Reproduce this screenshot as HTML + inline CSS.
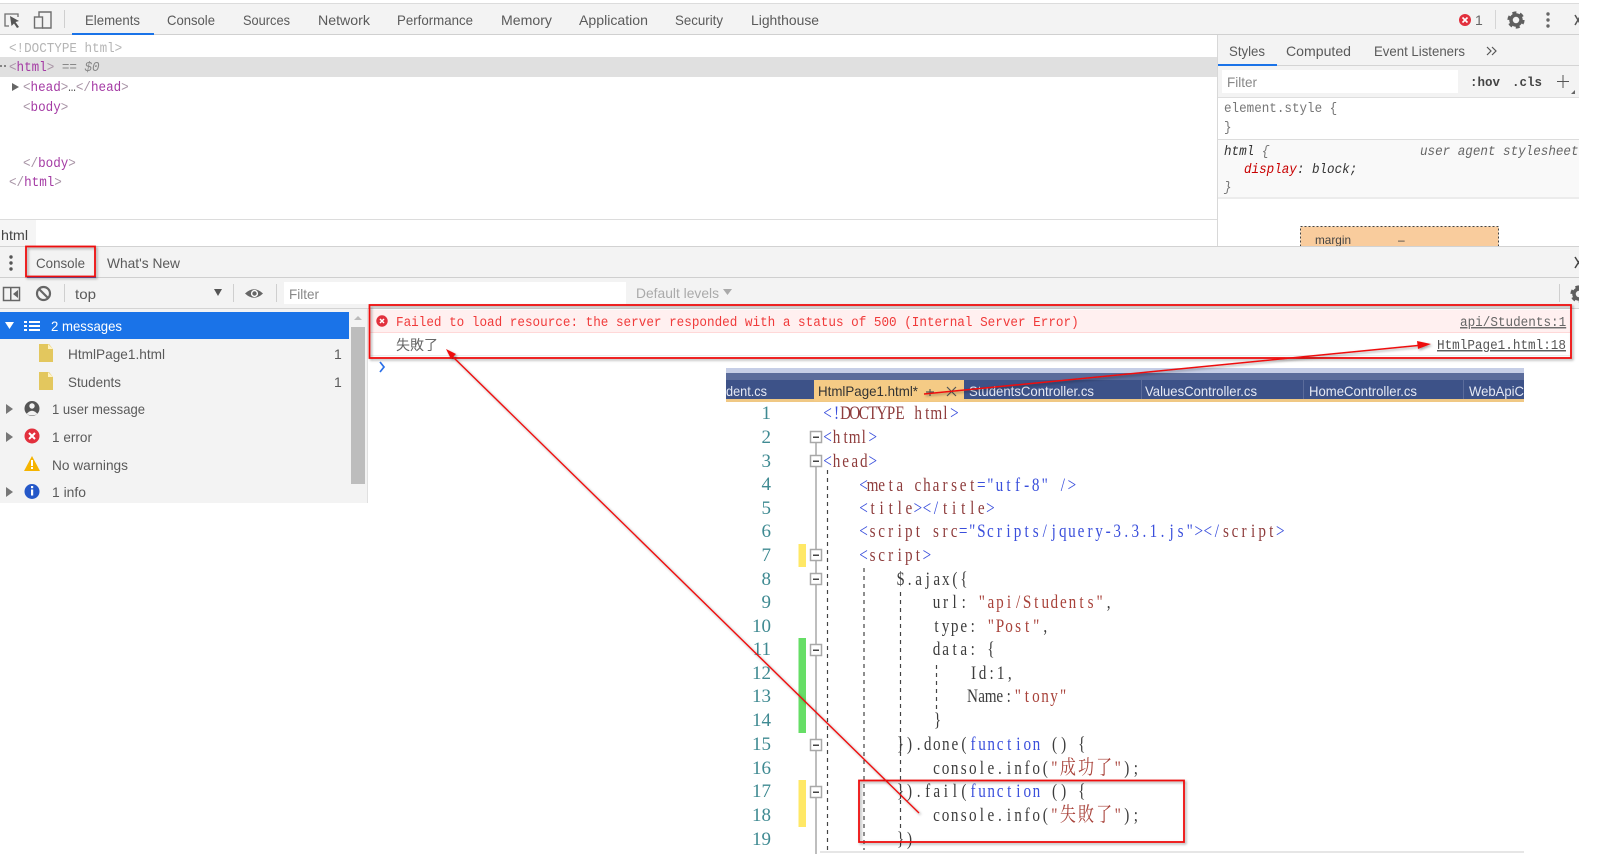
<!DOCTYPE html>
<html><head><meta charset="utf-8"><title>DevTools</title>
<style>
html,body{margin:0;padding:0;background:#fff;width:1600px;height:854px;overflow:hidden}
svg{display:block;position:absolute;left:0;top:0;font-family:"Liberation Sans",sans-serif;font-size:14px;fill:#5a5a5a;filter:blur(.35px)}
text{white-space:pre}
.m{font-family:"Liberation Mono",monospace;font-size:14px}
.p{fill:#a43aa4}
.c{font-family:"Liberation Serif","Noto Serif CJK SC",serif;font-size:19px;text-anchor:middle;fill:#3c3c3c}
.j{font-size:20px;font-family:"Noto Serif CJK TC","Noto Serif CJK SC",serif}
.b{fill:#3a4fdc}.r{fill:#8e3c3c}.st{fill:#a8423a}
.n{font-family:"Liberation Serif",serif;font-size:19px;fill:#3f8a92;text-anchor:end}
.f{fill:#fff;stroke:#a8a8a8;stroke-width:1.5}
</style></head>
<body>
<svg width="1600" height="854" viewBox="0 0 1600 854" xmlns="http://www.w3.org/2000/svg">
<defs><filter id="sh" x="-5%" y="-5%" width="110%" height="110%"><feDropShadow dx="1.5" dy="1.5" stdDeviation="1.2" flood-color="#000" flood-opacity=".35"/></filter></defs>

<!-- top toolbar -->
<rect x="0" y="3" width="1579" height="1" fill="#dcdcdc"/>
<rect x="0" y="4" width="1579" height="30" fill="#f3f3f3"/>
<rect x="0" y="34" width="1579" height="1" fill="#d0d0d0"/>
<rect x="72" y="33" width="82" height="2" fill="#1a73e8"/>
<g fill="none" stroke="#6e6e6e" stroke-width="1.3"><path d="M9 26H5V14H18V17"/></g>
<path d="M10 16L19 21L15.5 22L19 27L17 28L14 23.500L11.500 26Z" fill="#555"/>
<g fill="none" stroke="#6e6e6e" stroke-width="1.4"><path d="M39 17V12H51V28H42"/><rect x="34.500" y="17" width="8" height="11"/></g>
<rect x="64" y="10" width="1" height="18" fill="#cfcfcf"/>
<text x="85" y="25" textLength="55" lengthAdjust="spacingAndGlyphs">Elements</text>
<text x="167" y="25" textLength="48" lengthAdjust="spacingAndGlyphs">Console</text>
<text x="243" y="25" textLength="47" lengthAdjust="spacingAndGlyphs">Sources</text>
<text x="318" y="25" textLength="52" lengthAdjust="spacingAndGlyphs">Network</text>
<text x="397" y="25" textLength="76" lengthAdjust="spacingAndGlyphs">Performance</text>
<text x="501" y="25" textLength="51" lengthAdjust="spacingAndGlyphs">Memory</text>
<text x="579" y="25" textLength="69" lengthAdjust="spacingAndGlyphs">Application</text>
<text x="675" y="25" textLength="48" lengthAdjust="spacingAndGlyphs">Security</text>
<text x="751" y="25" textLength="68" lengthAdjust="spacingAndGlyphs">Lighthouse</text>
<circle cx="1465" cy="20" r="6" fill="#e2303d"/>
<path d="M1462.500 17.500L1467.500 22.500M1467.500 17.500L1462.500 22.500" stroke="#fff" stroke-width="1.6"/>
<text x="1475" y="25" fill="#666">1</text>
<rect x="1495" y="10" width="1" height="19" fill="#d5d5d5"/>
<circle cx="1516" cy="20" r="5" fill="none" stroke="#5f5f5f" stroke-width="3.500"/>
<circle cx="1516" cy="20" r="7.300" fill="none" stroke="#5f5f5f" stroke-width="2.600" stroke-dasharray="4 3.640"/>
<g fill="#666"><circle cx="1548" cy="14" r="1.700"/><circle cx="1548" cy="20" r="1.700"/><circle cx="1548" cy="26" r="1.700"/></g>
<path d="M1575 15L1581 25M1581 15L1575 25" stroke="#555" stroke-width="1.500"/>

<!-- elements tree -->
<rect x="0" y="57" width="1217" height="20" fill="#e0e0e0"/>
<text class="m" transform="translate(9 52) scale(.9 1)" fill="#b5b5b5">&lt;!DOCTYPE html&gt;</text>
<g fill="#666"><circle cx="1" cy="66" r="1"/><circle cx="5" cy="66" r="1"/></g>
<text class="m" transform="translate(9 71) scale(.9 1)" fill="#a894a6">&lt;<tspan class="p">html</tspan>&gt;<tspan fill="#888"> == <tspan font-style="italic">$0</tspan></tspan></text>
<path d="M12 83L19 87L12 91Z" fill="#666"/>
<text class="m" transform="translate(23 91) scale(.9 1)" fill="#a894a6">&lt;<tspan class="p">head</tspan>&gt;<tspan fill="#555">…</tspan>&lt;/<tspan class="p">head</tspan>&gt;</text>
<text class="m" transform="translate(23 111) scale(.9 1)" fill="#a894a6">&lt;<tspan class="p">body</tspan>&gt;</text>
<text class="m" transform="translate(23 167) scale(.9 1)" fill="#a894a6">&lt;/<tspan class="p">body</tspan>&gt;</text>
<text class="m" transform="translate(9 186) scale(.9 1)" fill="#a894a6">&lt;/<tspan class="p">html</tspan>&gt;</text>
<rect x="0" y="219" width="1217" height="1" fill="#dcdcdc"/>
<rect x="0" y="220" width="36" height="26" fill="#f5f5f5"/>
<text x="1" y="240" fill="#444" textLength="27" lengthAdjust="spacingAndGlyphs">html</text>

<!-- styles pane -->
<rect x="1217" y="35" width="1" height="211" fill="#d8d8d8"/>
<rect x="1218" y="35" width="361" height="62" fill="#f3f3f3"/>
<rect x="1218" y="65" width="361" height="1" fill="#d4d4d4"/>
<rect x="1218" y="64" width="59" height="2" fill="#1a73e8"/>
<text x="1229" y="56" textLength="36" lengthAdjust="spacingAndGlyphs">Styles</text>
<text x="1286" y="56" textLength="65" lengthAdjust="spacingAndGlyphs">Computed</text>
<text x="1374" y="56" textLength="91" lengthAdjust="spacingAndGlyphs">Event Listeners</text>
<path d="M1487 47L1491 51L1487 55M1492 47L1496 51L1492 55" fill="none" stroke="#555" stroke-width="1.200"/>
<rect x="1222" y="70" width="236" height="23" fill="#fff"/>
<text x="1227" y="87" fill="#888" textLength="30" lengthAdjust="spacingAndGlyphs">Filter</text>
<text class="m" x="1470" y="86" fill="#444" font-weight="bold" style="font-size:12.500px" textLength="30" lengthAdjust="spacingAndGlyphs">:hov</text>
<text class="m" x="1512" y="86" fill="#444" font-weight="bold" style="font-size:12.500px" textLength="30" lengthAdjust="spacingAndGlyphs">.cls</text>
<path d="M1563 75V88M1557 81.500H1569" stroke="#555" stroke-width="1"/>
<path d="M1575 90V94H1571Z" fill="#666"/>
<rect x="1218" y="97" width="361" height="1" fill="#dedede"/>
<text class="m" transform="translate(1224 112) scale(.9 1)" fill="#777">element.style {</text>
<text class="m" transform="translate(1224 131) scale(.9 1)" fill="#777">}</text>
<rect x="1218" y="139" width="361" height="1" fill="#dcdcdc"/>
<rect x="1218" y="140" width="361" height="57" fill="#f9f9f9"/>
<text class="m" transform="translate(1224 155) scale(.9 1)" font-style="italic" fill="#333">html <tspan fill="#777">{</tspan></text>
<text class="m" transform="translate(1420 155) scale(.9 1)" font-style="italic" fill="#666">user agent stylesheet</text>
<text class="m" transform="translate(1244 173) scale(.9 1)" font-style="italic" fill="#333"><tspan fill="#c80000">display</tspan>: block;</text>
<text class="m" transform="translate(1224 191) scale(.9 1)" font-style="italic" fill="#777">}</text>
<rect x="1218" y="197" width="361" height="2" fill="#ececec"/>
<rect x="1300.500" y="226.500" width="198" height="22" fill="#f9cc9d" stroke="#444" stroke-width="1" stroke-dasharray="2 2"/>
<text x="1315" y="244" fill="#444" font-size="12" textLength="36" lengthAdjust="spacingAndGlyphs">margin</text>
<text x="1398" y="244" fill="#444" font-size="12">–</text>

<!-- drawer tabs -->
<rect x="0" y="246" width="1579" height="1" fill="#d2d2d2"/>
<rect x="0" y="247" width="1579" height="62" fill="#f3f3f3"/>
<rect x="0" y="277" width="1579" height="1" fill="#cfcfcf"/>
<rect x="27" y="276" width="69" height="2" fill="#1a73e8"/>
<g fill="#555"><circle cx="11" cy="257" r="1.700"/><circle cx="11" cy="263" r="1.700"/><circle cx="11" cy="269" r="1.700"/></g>
<text x="36" y="268" textLength="49" lengthAdjust="spacingAndGlyphs">Console</text>
<text x="107" y="268" textLength="73" lengthAdjust="spacingAndGlyphs">What's New</text>
<path d="M1575 257L1582 268M1582 257L1575 268" stroke="#444" stroke-width="1.500"/>

<!-- console toolbar -->
<rect x="3.500" y="287.500" width="16" height="13" fill="none" stroke="#666" stroke-width="1.500"/>
<rect x="10" y="288" width="1.500" height="12" fill="#666"/>
<path d="M18 290V298L13 294Z" fill="#666"/>
<circle cx="43.500" cy="293.500" r="6.500" fill="none" stroke="#666" stroke-width="2.200"/>
<path d="M39 289L48 298" stroke="#666" stroke-width="2.200"/>
<rect x="64" y="284" width="1" height="18" fill="#cfcfcf"/>
<text x="75" y="299" textLength="21" lengthAdjust="spacingAndGlyphs">top</text>
<path d="M214 289H222L218 296Z" fill="#555"/>
<rect x="233" y="284" width="1" height="18" fill="#cfcfcf"/>
<path d="M245 293.500Q254 285 263 293.500Q254 302 245 293.500Z" fill="#666"/>
<circle cx="254.500" cy="293.500" r="3.600" fill="#fff"/><circle cx="254.500" cy="293.500" r="2.200" fill="#666"/>
<rect x="276" y="284" width="1" height="18" fill="#cfcfcf"/>
<rect x="284" y="282" width="342" height="22" fill="#fff"/>
<text x="289" y="299" fill="#888" textLength="30" lengthAdjust="spacingAndGlyphs">Filter</text>
<text x="636" y="298" fill="#aaa" textLength="83" lengthAdjust="spacingAndGlyphs">Default levels</text>
<path d="M723 289H732L727.500 295Z" fill="#aaa"/>
<rect x="1559" y="284" width="1" height="18" fill="#cfcfcf"/>
<circle cx="1579" cy="294" r="5" fill="none" stroke="#5f5f5f" stroke-width="3.500"/>
<circle cx="1579" cy="294" r="7.300" fill="none" stroke="#5f5f5f" stroke-width="2.600" stroke-dasharray="4 3.640"/>
<rect x="0" y="308" width="1579" height="1" fill="#d4d4d4"/>

<!-- sidebar -->
<rect x="0" y="309" width="367" height="194" fill="#f3f3f3"/>
<rect x="367" y="309" width="1" height="194" fill="#e0e0e0"/>
<rect x="0" y="312" width="349" height="27" fill="#1a73e8"/>
<path d="M5 322H14L9.500 329Z" fill="#fff"/>
<g fill="#fff"><rect x="24" y="321" width="3" height="2"/><rect x="29" y="321" width="11" height="2"/><rect x="24" y="325" width="3" height="2"/><rect x="29" y="325" width="11" height="2"/><rect x="24" y="329" width="3" height="2"/><rect x="29" y="329" width="11" height="2"/></g>
<text x="51" y="331" fill="#fff" textLength="71" lengthAdjust="spacingAndGlyphs">2 messages</text>
<path d="M39 344H49L53 349V362H39Z" fill="#e3c75e"/><path d="M48 344L53 349H48Z" fill="#fff3c4"/>
<text x="68" y="359" textLength="97" lengthAdjust="spacingAndGlyphs">HtmlPage1.html</text>
<text x="334" y="359">1</text>
<path d="M39 372H49L53 377V390H39Z" fill="#e3c75e"/><path d="M48 372L53 377H48Z" fill="#fff3c4"/>
<text x="68" y="387" textLength="53" lengthAdjust="spacingAndGlyphs">Students</text>
<text x="334" y="387">1</text>

<path d="M6 404L13 409L6 414Z" fill="#777"/>
<circle cx="32" cy="408.500" r="7.500" fill="#555"/><circle cx="32" cy="406" r="2.700" fill="#f3f3f3"/><path d="M26.500 414Q32 407.500 37.500 414Q32 417 26.500 414Z" fill="#f3f3f3"/>
<text x="52" y="414" textLength="93" lengthAdjust="spacingAndGlyphs">1 user message</text>
<path d="M6 432L13 437L6 442Z" fill="#777"/>
<circle cx="32" cy="436" r="7.500" fill="#e2303d"/><path d="M29 433L35 439M35 433L29 439" stroke="#fff" stroke-width="2"/>
<text x="52" y="442" textLength="40" lengthAdjust="spacingAndGlyphs">1 error</text>
<path d="M32 456L40 471H24Z" fill="#f5b400"/><rect x="31" y="460" width="2" height="6" fill="#fff"/><rect x="31" y="467" width="2" height="2" fill="#fff"/>
<text x="52" y="470" textLength="76" lengthAdjust="spacingAndGlyphs">No warnings</text>
<path d="M6 487L13 492L6 497Z" fill="#777"/>
<circle cx="32" cy="491.500" r="7.500" fill="#2558c8"/><rect x="31" y="489.500" width="2.200" height="6" fill="#fff"/><rect x="31" y="486" width="2.200" height="2.200" fill="#fff"/>
<text x="52" y="497" textLength="34" lengthAdjust="spacingAndGlyphs">1 info</text>
<rect x="351" y="327" width="14" height="157" fill="#bdbdbd"/>
<path d="M354 320L358 316L362 320Z" fill="#bbb"/>

<!-- console messages -->
<rect x="369" y="310" width="1202" height="23" fill="#fff0f0"/>
<rect x="369" y="332" width="1202" height="1" fill="#ffd8d8"/>
<rect x="369" y="355" width="1202" height="1" fill="#ededed"/>
<circle cx="382" cy="321" r="5.700" fill="#e2303d"/><path d="M380 319L384 323M384 319L380 323" stroke="#fff" stroke-width="1.500"/>
<text class="m" transform="translate(396 326) scale(.904 1)" fill="#f03a3a">Failed to load resource: the server responded with a status of 500 (Internal Server Error)</text>
<text class="m" transform="translate(1460 326) scale(.904 1)" fill="#666" text-decoration="underline">api/Students:1</text>
<text class="m" transform="translate(1437 349) scale(.904 1)" fill="#555" text-decoration="underline">HtmlPage1.html:18</text>
<text x="396" y="350" font-family="'Noto Sans CJK TC','Noto Sans CJK SC',sans-serif" font-size="14" fill="#666">失敗了</text>
<path d="M380 362L384 367L380 372" fill="none" stroke="#2a6fe8" stroke-width="1.700"/>

<!-- editor tabs -->
<rect x="726" y="368" width="798" height="5" fill="#c6cee6"/>
<rect x="726" y="373" width="798" height="7" fill="#5b6c9b"/>
<rect x="726" y="380" width="798" height="19" fill="#3d5288"/>
<rect x="726" y="399" width="798" height="3" fill="#f0c884"/>
<rect x="814" y="380" width="150" height="21" fill="#f5cb85"/>
<rect x="1141" y="380" width="1" height="19" fill="#5b6c9b"/><rect x="1303" y="380" width="1" height="19" fill="#5b6c9b"/><rect x="1463" y="380" width="1" height="19" fill="#5b6c9b"/>
<g fill="#e4e8f4">
<text x="726" y="396" textLength="41" lengthAdjust="spacingAndGlyphs">dent.cs</text>
<text x="969" y="396" textLength="125" lengthAdjust="spacingAndGlyphs">StudentsController.cs</text>
<text x="1145" y="396" textLength="112" lengthAdjust="spacingAndGlyphs">ValuesController.cs</text>
<text x="1309" y="396" textLength="108" lengthAdjust="spacingAndGlyphs">HomeController.cs</text>
<text x="1469" y="396" textLength="55" lengthAdjust="spacingAndGlyphs">WebApiC</text>
<text x="818" y="396" textLength="100" lengthAdjust="spacingAndGlyphs" fill="#333">HtmlPage1.html*</text>
</g>
<path d="M930 389V396M926 392H934M947 387L956 396M956 387L947 396" stroke="#555" stroke-width="1.200" fill="none"/>

<!-- gutter -->
<rect x="798.500" y="544" width="7.500" height="23" fill="#ffe866"/>
<rect x="798.500" y="780" width="7.500" height="47" fill="#ffe866"/>
<rect x="798.500" y="638" width="7.500" height="95" fill="#66de66"/>
<path d="M816 443V854" stroke="#a8a8a8" stroke-width="1.500"/>
<g stroke="#444" stroke-width="1.200" stroke-dasharray="4 4" fill="none">
<path d="M827.500 470V854"/><path d="M864 568V850"/><path d="M900.500 592V830"/><path d="M936.500 665V710"/>
</g>
<g>
<rect class="f" x="810.500" y="431.500" width="11" height="11"/><rect x="813" y="436.500" width="6" height="1.500" fill="#444"/>
<rect class="f" x="810.500" y="455.500" width="11" height="11"/><rect x="813" y="460.500" width="6" height="1.500" fill="#444"/>
<rect class="f" x="810.500" y="549.500" width="11" height="11"/><rect x="813" y="554.500" width="6" height="1.500" fill="#444"/>
<rect class="f" x="810.500" y="573.500" width="11" height="11"/><rect x="813" y="578.500" width="6" height="1.500" fill="#444"/>
<rect class="f" x="810.500" y="644.500" width="11" height="11"/><rect x="813" y="649.500" width="6" height="1.500" fill="#444"/>
<rect class="f" x="810.500" y="739.500" width="11" height="11"/><rect x="813" y="744.500" width="6" height="1.500" fill="#444"/>
<rect class="f" x="810.500" y="786.500" width="11" height="11"/><rect x="813" y="791.500" width="6" height="1.500" fill="#444"/>
</g>

<!-- line numbers -->
<g transform="translate(0 -1)">
<text class="n" x="771" y="420">1</text><text class="n" x="771" y="444">2</text><text class="n" x="771" y="468">3</text><text class="n" x="771" y="491">4</text><text class="n" x="771" y="515">5</text><text class="n" x="771" y="538">6</text><text class="n" x="771" y="562">7</text><text class="n" x="771" y="586">8</text><text class="n" x="771" y="609">9</text><text class="n" x="771" y="633">10</text><text class="n" x="771" y="656">11</text><text class="n" x="771" y="680">12</text><text class="n" x="771" y="703">13</text><text class="n" x="771" y="727">14</text><text class="n" x="771" y="751">15</text><text class="n" x="771" y="775">16</text><text class="n" x="771" y="798">17</text><text class="n" x="771" y="822">18</text><text class="n" x="771" y="846">19</text>
</g>

<!-- code -->
<text class="c" transform="translate(823 419) scale(.8 1)" x="5.660 16.990 28.310 39.640 50.960 62.290 73.610 84.940 96.260 107.590 118.910 130.240 141.560 152.890 164.210"><tspan class="b">&lt;!</tspan><tspan class="r">DOCTYPE html</tspan><tspan class="b">&gt;</tspan></text>
<text class="c" transform="translate(823 443) scale(.8 1)" x="5.660 16.990 28.310 39.640 50.960 62.290"><tspan class="b">&lt;</tspan><tspan class="r">html</tspan><tspan class="b">&gt;</tspan></text>
<text class="c" transform="translate(823 467) scale(.8 1)" x="5.660 16.990 28.310 39.640 50.960 62.290"><tspan class="b">&lt;</tspan><tspan class="r">head</tspan><tspan class="b">&gt;</tspan></text>
<text class="c" transform="translate(859 491) scale(.8 1)" x="5.660 16.990 28.310 39.640 50.960 62.290 73.610 84.940 96.260 107.590 118.910 130.240 141.560 152.890 164.210 175.540 186.860 198.190 209.510 220.840 232.160 243.490 254.810 266.140"><tspan class="b">&lt;</tspan><tspan class="r">meta charset</tspan><tspan class="b">="utf-8" /&gt;</tspan></text>
<text class="c" transform="translate(859 514) scale(.8 1)" x="5.660 16.990 28.310 39.640 50.960 62.290 73.610 84.940 96.260 107.590 118.910 130.240 141.560 152.890 164.210"><tspan class="b">&lt;</tspan><tspan class="r">title</tspan><tspan class="b">&gt;&lt;/</tspan><tspan class="r">title</tspan><tspan class="b">&gt;</tspan></text>
<text class="c" transform="translate(859 537) scale(.8 1)" x="5.660 16.990 28.310 39.640 50.960 62.290 73.610 84.940 96.260 107.590 118.910 130.240 141.560 152.890 164.210 175.540 186.860 198.190 209.510 220.840 232.160 243.490 254.810 266.140 277.460 288.790 300.110 311.440 322.760 334.090 345.410 356.740 368.060 379.390 390.710 402.040 413.360 424.690 436.010 447.340 458.660 469.990 481.310 492.640 503.960 515.290 526.610"><tspan class="b">&lt;</tspan><tspan class="r">script src</tspan><tspan class="b">="Scripts/jquery-3.3.1.js"&gt;&lt;/</tspan><tspan class="r">script</tspan><tspan class="b">&gt;</tspan></text>
<text class="c" transform="translate(859 561) scale(.8 1)" x="5.660 16.990 28.310 39.640 50.960 62.290 73.610 84.940"><tspan class="b">&lt;</tspan><tspan class="r">script</tspan><tspan class="b">&gt;</tspan></text>
<text class="c" transform="translate(896 585) scale(.8 1)" x="5.660 16.990 28.310 39.640 50.960 62.290 73.610 84.940">$.ajax({</text>
<text class="c" transform="translate(932 608) scale(.8 1)" x="5.660 16.990 28.310 39.640 50.960 62.290 73.610 84.940 96.260 107.590 118.910 130.240 141.560 152.890 164.210 175.540 186.860 198.190 209.510 220.840">url: <tspan class="st">"api/Students"</tspan>,</text>
<text class="c" transform="translate(932 632) scale(.8 1)" x="5.660 16.990 28.310 39.640 50.960 62.290 73.610 84.940 96.260 107.590 118.910 130.240 141.560">type: <tspan class="st">"Post"</tspan>,</text>
<text class="c" transform="translate(932 655) scale(.8 1)" x="5.660 16.990 28.310 39.640 50.960 62.290 73.610">data: {</text>
<text class="c" transform="translate(969 679) scale(.8 1)" x="5.660 16.990 28.310 39.640 50.960">Id:1,</text>
<text class="c" transform="translate(968 702) scale(.8 1)" x="5.660 16.990 28.310 39.640 50.960 62.290 73.610 84.940 96.260 107.590 118.910">Name:<tspan class="st">"tony"</tspan></text>
<text class="c" transform="translate(933 726) scale(.8 1)" x="5.660">}</text>
<text class="c" transform="translate(896 750) scale(.8 1)" x="5.660 16.990 28.310 39.640 50.960 62.290 73.610 84.940 96.260 107.590 118.910 130.240 141.560 152.890 164.210 175.540 186.860 198.190 209.510 220.840 232.160">}).done(<tspan class="b">function</tspan> () {</text>
<text class="c" transform="translate(932 774) scale(.8 1)" x="5.660 16.990 28.310 39.640 50.960 62.290 73.610 84.940 96.260 107.590 118.910 130.240 141.560 152.890 169.900 192.500 215.200 232.160 243.490 254.810">console.info(<tspan class="st">"<tspan class="j">成功了</tspan>"</tspan>);</text>
<text class="c" transform="translate(896 797) scale(.8 1)" x="5.660 16.990 28.310 39.640 50.960 62.290 73.610 84.940 96.260 107.590 118.910 130.240 141.560 152.890 164.210 175.540 186.860 198.190 209.510 220.840 232.160">}).fail(<tspan class="b">function</tspan> () {</text>
<text class="c" transform="translate(932 821) scale(.8 1)" x="5.660 16.990 28.310 39.640 50.960 62.290 73.610 84.940 96.260 107.590 118.910 130.240 141.560 152.890 169.900 192.500 215.200 232.160 243.490 254.810">console.info(<tspan class="st">"<tspan class="j">失敗了</tspan>"</tspan>);</text>
<text class="c" transform="translate(896 845) scale(.8 1)" x="5.660 16.990">})</text>
<rect x="820" y="851" width="704" height="2" fill="#e6e6e6"/>

<!-- clip at right edge of the screenshot -->
<rect x="1579" y="0" width="21" height="360" fill="#fff"/>

<!-- annotations -->
<g fill="none" stroke="#ee1111" stroke-width="1.800" filter="url(#sh)">
<rect x="26" y="246.500" width="69" height="30"/>
<rect x="369.500" y="305" width="1201.500" height="53"/>
<rect x="859" y="780.500" width="325" height="61.500"/>
</g>
<g filter="url(#sh)">
<path d="M919 813L450 354" stroke="#ee1111" stroke-width="1.400" fill="none"/>
<path d="M446 349L456 354L451 359Z" fill="#ee1111"/>
<path d="M924 394L1418 345.500" stroke="#ee1111" stroke-width="1.500" fill="none"/>
<path d="M1431 344L1417 341L1418 349Z" fill="#ee1111"/>
</g>
</svg>
</body></html>
